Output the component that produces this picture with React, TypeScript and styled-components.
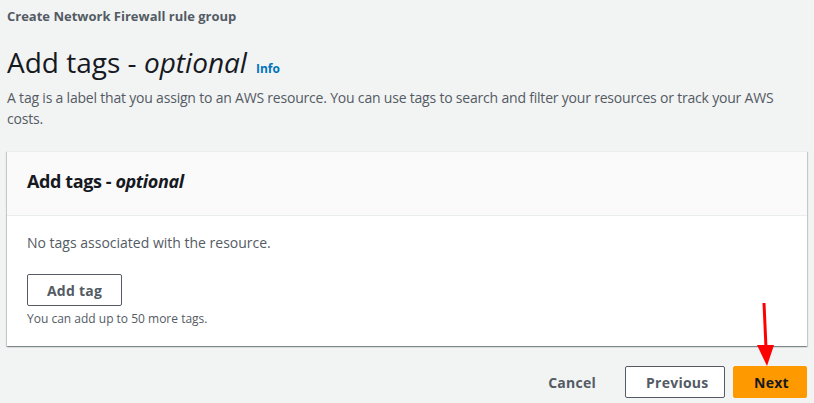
import React from "react";
import styled, { createGlobalStyle } from "styled-components";

const Global = createGlobalStyle`
  html, body { margin: 0; padding: 0; background: #f2f3f3; }
  body { font-family: "Open Sans", "Noto Sans", Arial, sans-serif; color: #16191f; }
  * { box-sizing: border-box; }
`;

const Page = styled.div`
  position: relative;
  width: 814px;
  height: 403px;
  padding: 6px 7px 0 7px;
  overflow: hidden;
`;

const Breadcrumb = styled.div`
  font-size: 13px;
  font-weight: 700;
  line-height: 20px;
  color: #545b64;
`;

const TitleRow = styled.div`
  display: flex;
  align-items: baseline;
  gap: 9px;
  margin-top: 19px;
`;

const Heading = styled.h1`
  margin: 0;
  font-size: 28px;
  font-weight: 400;
  line-height: 34px;
  color: #16191f;
  em { font-style: italic; }
`;

const InfoLink = styled.a`
  font-size: 12px;
  font-weight: 700;
  color: #0073bb;
  text-decoration: none;
`;

const Description = styled.p`
  margin: 8px 0 0;
  font-size: 14px;
  line-height: 21px;
  letter-spacing: -0.2px;
  color: #545b64;
`;

const Card = styled.section`
  margin-top: 22px;
  background: #fff;
  border-top: 1px solid #eaeded;
  box-shadow: 0 1px 1px 0 rgba(0, 28, 36, 0.3), 1px 1px 1px 0 rgba(0, 28, 36, 0.15),
    -1px 1px 1px 0 rgba(0, 28, 36, 0.15);
`;

const CardHeader = styled.header`
  background: #fafafa;
  border-bottom: 1px solid #eaeded;
  padding: 18px 20px 23px;
`;

const CardTitle = styled.h2`
  margin: 0;
  font-size: 18px;
  font-weight: 700;
  line-height: 22px;
  letter-spacing: -0.4px;
  color: #16191f;
  em { font-style: italic; }
`;

const CardBody = styled.div`
  padding: 16px 20px 19px;
  display: flex;
  flex-direction: column;
  align-items: flex-start;
`;

const EmptyText = styled.div`
  font-size: 14px;
  line-height: 22px;
  color: #545b64;
`;

const Button = styled.button<{ $variant?: "normal" | "primary" | "link"; $width?: number }>`
  height: 32px;
  width: ${(p) => (p.$width ? `${p.$width}px` : "auto")};
  padding: 0 20px;
  border-radius: 2px;
  font-family: inherit;
  font-size: 14px;
  font-weight: 700;
  letter-spacing: 0.25px;
  cursor: pointer;
  border: 1px solid
    ${(p) => (p.$variant === "primary" ? "#ff9900" : p.$variant === "link" ? "transparent" : "#545b64")};
  background: ${(p) => (p.$variant === "primary" ? "#ff9900" : p.$variant === "link" ? "transparent" : "#fff")};
  color: ${(p) => (p.$variant === "primary" ? "#16191f" : "#545b64")};
`;

const AddTagButton = styled(Button)`
  margin-top: 20px;
  padding: 0;
`;

const Hint = styled.div`
  margin-top: 5px;
  font-size: 12px;
  line-height: 16px;
  color: #545b64;
`;

const Footer = styled.div`
  display: flex;
  justify-content: flex-end;
  align-items: center;
  gap: 8px;
  margin-top: 20px;
`;

const ArrowOverlay = styled.svg`
  position: absolute;
  left: 750px;
  top: 298px;
  pointer-events: none;
`;

export default function App() {
  return (
    <>
      <Global />
      <Page>
        <Breadcrumb>Create Network Firewall rule group</Breadcrumb>
        <TitleRow>
          <Heading>
            Add tags - <em>optional</em>
          </Heading>
          <InfoLink href="#">Info</InfoLink>
        </TitleRow>
        <Description>
          A tag is a label that you assign to an AWS resource. You can use tags to search and filter your resources or
          track your AWS costs.
        </Description>
        <Card>
          <CardHeader>
            <CardTitle>
              Add tags - <em>optional</em>
            </CardTitle>
          </CardHeader>
          <CardBody>
            <EmptyText>No tags associated with the resource.</EmptyText>
            <AddTagButton $width={95}>Add tag</AddTagButton>
            <Hint>You can add up to 50 more tags.</Hint>
          </CardBody>
        </Card>
        <Footer>
          <Button $variant="link">Cancel</Button>
          <Button $width={100}>Previous</Button>
          <Button $variant="primary" $width={74}>
            Next
          </Button>
        </Footer>
        <ArrowOverlay width="30" height="72" viewBox="0 0 30 72">
          <line x1="14" y1="5" x2="16" y2="50" stroke="#ff0000" strokeWidth="3" />
          <polygon points="7,47 24,47 17,68" fill="#ff0000" />
        </ArrowOverlay>
      </Page>
    </>
  );
}
